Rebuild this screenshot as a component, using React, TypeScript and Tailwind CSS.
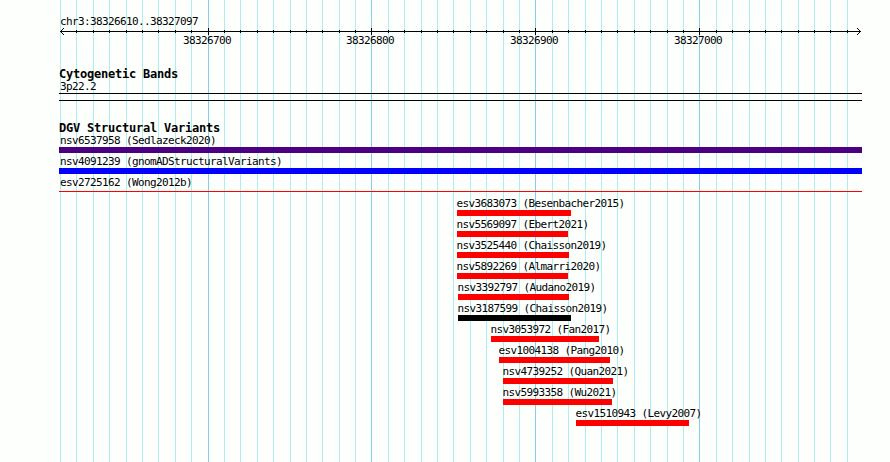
type Variant = {
  id: string;
  study: string;
  start: number;
  end: number;
  color: string;
  thin?: boolean;
};

const gridLines = [
  60, 76, 93, 109, 126, 142, 158, 175, 191, 208, 224, 240, 257, 273, 290, 306, 322, 339, 355, 371,
  388, 404, 421, 437, 453, 470, 486, 503, 519, 535, 552, 568, 585, 601, 617, 634, 650, 667, 683,
  699, 716, 732, 749, 765, 781, 798, 814, 830, 847,
];

const majorLines = [208, 371, 535, 699];

const variants: Variant[] = [
  { id: "nsv6537958", study: "Sedlazeck2020", start: 59, end: 862, color: "bg-[#4b0082]" },
  { id: "nsv4091239", study: "gnomADStructuralVariants", start: 59, end: 862, color: "bg-[#0000ff]" },
  { id: "esv2725162", study: "Wong2012b", start: 59, end: 862, color: "bg-[#ff0000]", thin: true },
  { id: "esv3683073", study: "Besenbacher2015", start: 457, end: 571, color: "bg-[#ff0000]" },
  { id: "nsv5569097", study: "Ebert2021", start: 457, end: 568, color: "bg-[#ff0000]" },
  { id: "nsv3525440", study: "Chaisson2019", start: 457, end: 569, color: "bg-[#ff0000]" },
  { id: "nsv5892269", study: "Almarri2020", start: 457, end: 568, color: "bg-[#ff0000]" },
  { id: "nsv3392797", study: "Audano2019", start: 458, end: 569, color: "bg-[#ff0000]" },
  { id: "nsv3187599", study: "Chaisson2019", start: 458, end: 571, color: "bg-black" },
  { id: "nsv3053972", study: "Fan2017", start: 491, end: 599, color: "bg-[#ff0000]" },
  { id: "esv1004138", study: "Pang2010", start: 499, end: 610, color: "bg-[#ff0000]" },
  { id: "nsv4739252", study: "Quan2021", start: 503, end: 613, color: "bg-[#ff0000]" },
  { id: "nsv5993358", study: "Wu2021", start: 503, end: 612, color: "bg-[#ff0000]" },
  { id: "esv1510943", study: "Levy2007", start: 576, end: 689, color: "bg-[#ff0000]" },
];

function Grid() {
  return (
    <svg className="absolute inset-0" width="890" height="462" shapeRendering="crispEdges">
      {gridLines.map((x) => (
        <rect key={x} x={x} y="0" width="1" height="462" fill={majorLines.includes(x) ? "#87ceeb" : "#afeeee"} />
      ))}
    </svg>
  );
}

function Ruler() {
  return (
    <div>
      <div className="pl-[60px] pt-[15px] h-7">
        <div className="h-[13px] leading-[13px]">chr3:38326610..38327097</div>
      </div>
      <svg className="block" width="890" height="7" shapeRendering="crispEdges">
        <rect x="60" y="3" width="801" height="1" />
        {gridLines.slice(1).map((x) =>
          majorLines.includes(x) ? (
            <rect key={x} x={x} y="0" width="1" height="7" />
          ) : (
            <rect key={x} x={x} y="2" width="1" height="3" />
          )
        )}
        {/* arrow heads */}
        <path d="M61 2h1v1h-1zM62 1h1v1h-1zM63 0h1v1h-1zM61 4h1v1h-1zM62 5h1v1h-1zM63 6h1v1h-1z" />
        <path d="M859 2h1v1h-1zM858 1h1v1h-1zM857 0h1v1h-1zM859 4h1v1h-1zM858 5h1v1h-1zM857 6h1v1h-1z" />
      </svg>
      <div className="flex gap-[116px] pl-[183px] h-3 leading-[12px]">
        <span className="w-12">38326700</span>
        <span className="w-12 -ml-px">38326800</span>
        <span className="w-12">38326900</span>
        <span className="w-12">38327000</span>
      </div>
    </div>
  );
}

function TrackTitle({ children }: { children: string }) {
  return (
    <h2 className="pl-[59px] h-3 leading-[12px] text-[12px] font-bold tracking-[-0.224px]">{children}</h2>
  );
}

function VariantRow({ variant }: { variant: Variant }) {
  const { id, study, start, end, color, thin } = variant;
  return (
    <div className="h-[21px]" style={{ marginLeft: start }}>
      <div className={start === 59 ? "h-[13px] leading-[13px] ml-px" : "h-[13px] leading-[13px] ml-[-0.5px]"}>
        {id} ({study})
      </div>
      <div
        className={thin ? `h-px mt-[2px] ${color}` : `h-[6px] ${color}`}
        style={{ width: end - start }}
      />
    </div>
  );
}

export default function App() {
  return (
    <div className="relative w-[890px] h-[462px] overflow-hidden bg-[#fdfffd] text-black whitespace-nowrap text-[11px] tracking-[-0.622px] font-['DejaVu_Sans_Mono',monospace]">
      <Grid />
      <div className="relative">
        <Ruler />

        <section className="pt-[21px]">
          <TrackTitle>Cytogenetic Bands</TrackTitle>
          <div className="pl-[60px] h-[13px] leading-[13px]">3p22.2</div>
          <div className="ml-[59px] w-[803px] h-2 border-y border-black" />
        </section>

        <section className="pt-[21px]">
          <TrackTitle>DGV Structural Variants</TrackTitle>
          {variants.map((v) => (
            <VariantRow key={v.id} variant={v} />
          ))}
        </section>
      </div>
    </div>
  );
}
